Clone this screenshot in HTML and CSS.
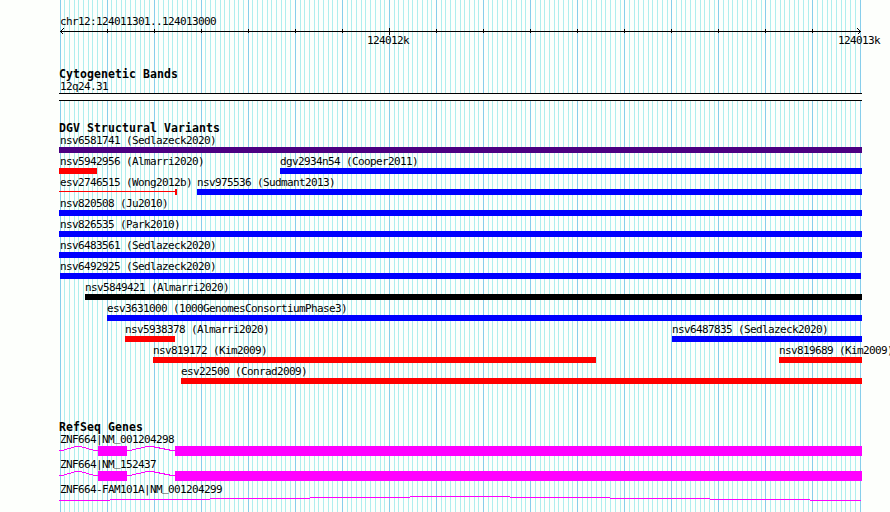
FILE: index.html
```html
<!DOCTYPE html>
<html lang="en">
<head>
<meta charset="utf-8">
<title>chr12:124011301..124013000</title>
<link rel="stylesheet" href="styles.css">
</head>
<body>
<svg class="gridlines" width="890" height="512" aria-hidden="true">
  <path id="minor" class="minor"/>
  <path id="major" class="major"/>
</svg>
<main class="browser">
  <header class="ruler">
    <div class="label">chr12:124011301..124013000</div>
    <svg class="axis" width="803" height="7">
      <path d="M1 3.5H802M1.5 3.5l3-3M1.5 3.5l3 3M801.5 3.5l-3-3M801.5 3.5l-3 3"/>
      <path id="ticks"/>
      <path d="M330.5 0V7"/>
    </svg>
    <div class="tick-labels"><span>124012k</span><span>124013k</span></div>
  </header>
  <section class="cyto">
    <h2>Cytogenetic Bands</h2>
    <div class="label">12q24.31</div>
    <div class="band"></div>
  </section>
  <section class="variants">
    <h2>DGV Structural Variants</h2>
    <div id="variants"></div>
  </section>
  <section class="genes">
    <h2>RefSeq Genes</h2>
    <div class="gene">
      <div class="label">ZNF664|NM<span class="under">_</span>001204298</div>
      <svg width="803" height="10"><path class="intron" d="M0 4.5H3L17 .5H21L36 4.5H39M68 4.5H71L88 .5H93L113 4.5H116"/><path class="exon" d="M39 0h29v10H39zM116 0h687v10H116z"/></svg>
    </div>
    <div class="gene">
      <div class="label">ZNF664|NM<span class="under">_</span>152437</div>
      <svg width="803" height="10"><path class="intron" d="M0 4.5H3L17 .5H21L36 4.5H39M68 4.5H71L88 .5H93L113 4.5H116"/><path class="exon" d="M39 0h29v10H39zM116 0h687v10H116z"/></svg>
    </div>
    <div class="gene">
      <div class="label">ZNF664-FAM101A|NM<span class="under">_</span>001204299</div>
      <svg width="803" height="10"><path class="intron" d="M0 4.5H51M51 3.5H151M151 2.5H251M251 1.5H351M351 .5H451M451 1.5H551M551 2.5H651M651 3.5H751M751 4.5H802"/></svg>
    </div>
  </section>
</main>
<script src="script.js"></script>
</body>
</html>
```
FILE: styles.css
```css
* { box-sizing: border-box; }
body {
  position: relative;
  margin: 0;
  width: 890px;
  height: 512px;
  overflow: hidden;
  background: #fdfffc;
  color: #000;
  font: 11px/13px "DejaVu Sans Mono", "Liberation Mono", monospace;
  letter-spacing: -0.622px;
}
svg { display: block; shape-rendering: crispEdges; }
.gridlines { position: absolute; left: 0; top: 0; }
.minor, .major { fill: none; stroke-width: 1; }
.minor { stroke: #afeeee; }
.major { stroke: #87ceeb; }
.browser { position: relative; width: 890px; padding: 15px 0 0 59px; }
h2 {
  margin: 0;
  height: 11px;
  font-size: 11.5px;
  line-height: 14px;
  font-weight: bold;
  letter-spacing: 0.077px;
}
.label { height: 13px; padding-left: 1px; white-space: nowrap; }
.ruler { height: 52px; }
.axis { fill: none; stroke: #000; }
.tick-labels { display: flex; margin-top: -1px; padding-left: 308px; gap: 429px; }
.tick-labels span { width: 42px; white-space: nowrap; }
.cyto { height: 54px; }
.cyto h2 { height: 13px; }
.band {
  width: 803px;
  height: 8px;
  border: solid #000;
  border-width: 1px 0;
  background: #fdfffc;
}
.variants { height: 299px; }
.row { display: flex; height: 21px; }
.item { flex: none; }
.item .label { height: 15px; padding: 2px 0 0; }
.item .label.clipped { padding-left: 1px; }
.bar { height: 6px; }
.blue { background: #00f; }
.red { background: #f00; }
.indigo { background: #4b0082; }
.black { background: #000; }
.thin { display: flex; align-items: center; }
.thin::before { content: ""; flex: 1; height: 1px; margin-bottom: 1px; background: #f00; }
.thin::after { content: ""; width: 2px; height: 6px; background: #f00; }
.gene { height: 25px; }
.gene .label { height: 15px; padding-top: 2px; }
.under { line-height: 0; vertical-align: 2px; }
.intron { fill: none; stroke: #f0f; }
.exon { fill: #f0f; }
```
FILE: script.js
```js
// Grid lines divide the 800px span into 170 steps, with a heavier one each tenth.
let minor = "", major = "", ticks = "";
for (let i = 0; i <= 170; i++) {
  const x = Math.floor(60 + i * 800 / 170 + 1e-6);
  const line = `M${x + 0.5} 0V512`;
  if (i % 10) minor += line;
  else {
    major += line;
    if (i && i < 170) ticks += `M${x - 58.5} 1V5`;
  }
}
document.getElementById("minor").setAttribute("d", minor);
document.getElementById("major").setAttribute("d", major);
document.getElementById("ticks").setAttribute("d", ticks);

// Each item: name, start, end, colour class.
const rows = [
  [["nsv6581741 (Sedlazeck2020)", 59, 862, "indigo"]],
  [["nsv5942956 (Almarri2020)", 59, 97, "red"], ["dgv2934n54 (Cooper2011)", 280, 862, "blue"]],
  [["esv2746515 (Wong2012b)", 59, 177, "thin"], ["nsv975536 (Sudmant2013)", 197, 862, "blue"]],
  [["nsv820508 (Ju2010)", 59, 862, "blue"]],
  [["nsv826535 (Park2010)", 59, 862, "blue"]],
  [["nsv6483561 (Sedlazeck2020)", 59, 862, "blue"]],
  [["nsv6492925 (Sedlazeck2020)", 60, 861, "blue"]],
  [["nsv5849421 (Almarri2020)", 85, 862, "black"]],
  [["esv3631000 (1000GenomesConsortiumPhase3)", 107, 862, "blue"]],
  [["nsv5938378 (Almarri2020)", 125, 175, "red"], ["nsv6487835 (Sedlazeck2020)", 672, 862, "blue"]],
  [["nsv819172 (Kim2009)", 153, 596, "red"], ["nsv819689 (Kim2009)", 779, 862, "red"]],
  [["esv22500 (Conrad2009)", 181, 862, "red"]]
];
document.getElementById("variants").innerHTML = rows.map(row => {
  let at = 59;
  return `<div class="row">` + row.map(([name, start, end, kind]) => {
    const gap = start - at;
    at = end;
    return `<div class="item" style="margin-left:${gap}px;width:${end - start}px">` +
      `<div class="label${start === 59 ? " clipped" : ""}">${name}</div><div class="bar ${kind}"></div></div>`;
  }).join("") + `</div>`;
}).join("");
```
